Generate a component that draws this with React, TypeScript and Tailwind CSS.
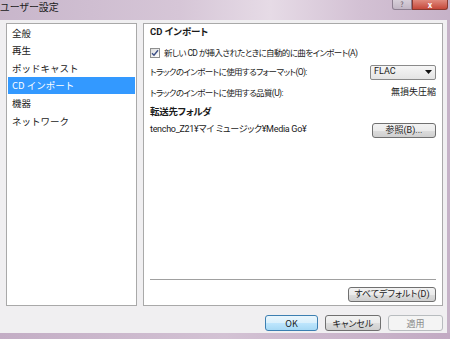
import React from 'react'

const font = "font-['Meiryo_UI','Noto_Sans_CJK_JP',sans-serif] [font-feature-settings:'palt']"
const panelFont = "font-['Roboto','Noto_Sans_CJK_JP',sans-serif] [font-feature-settings:'palt']"
// labels in the reference are set in a narrow UI face; squeeze them a bit
const label = 'text-[8.5px] tracking-[-0.6px]'

const menuItems = ['全般', '再生', 'ポッドキャスト', 'CD インポート', '機器', 'ネットワーク']

function WinButton({
  children,
  className = '',
  variant = 'normal',
}: {
  children: React.ReactNode
  className?: string
  variant?: 'normal' | 'default' | 'disabled'
}) {
  const look =
    variant === 'default'
      ? 'border-[#3c7fb1] bg-[linear-gradient(#eaf6fd_0%,#d9f0fc_50%,#bee6fd_51%,#a7d9f5_100%)] text-[#1a1a1a]'
      : variant === 'disabled'
        ? 'border-[#b8bcbf] bg-[#f4f4f4] text-[#8a8a8a]'
        : 'border-[#707070] bg-[linear-gradient(#f2f2f2_0%,#ebebeb_50%,#dddddd_51%,#cfcfcf_100%)] text-[#1a1a1a]'
  return (
    <div
      className={`flex h-[15px] items-center justify-center rounded-[3px] border text-[9px] leading-none ${look} ${className}`}
    >
      {children}
    </div>
  )
}

export default function App() {
  return (
    <div className={`flex h-[339px] w-[450px] flex-col overflow-hidden bg-[#f0eff1] ${font}`}>
      {/* title bar */}
      <div className="flex h-[20px] shrink-0 items-start justify-between bg-[linear-gradient(90deg,#c8b6cb_0%,#d6c6d7_40%,#e6dbe6_60%,#d3c1d4_80%,#c6b2c8_100%)]">
        <span className="pt-[1px] text-[10px] leading-[12px] text-[#202020]">ユーザー設定</span>
        <div className="mr-[2px] flex">
          <div className="flex h-[10px] w-[20px] items-center justify-center rounded-bl-[3px] border border-t-0 border-[#8d7f91] bg-[linear-gradient(#d8d0da,#c1b6c4)] text-[7px] leading-none text-[#5a5060]">
            ?
          </div>
          <div className="flex h-[10px] w-[36px] items-center justify-center rounded-br-[3px] border border-t-0 border-[#8a3a30] bg-[linear-gradient(#e08a7d,#c5483a)] text-[8px] font-bold leading-none text-white">
            x
          </div>
        </div>
      </div>

      {/* body */}
      <div className="flex flex-1 flex-col border-r-[3px] border-[#c5b2c7] pl-[6px] pr-[4px] pt-[3px]">
        <div className="flex h-[283px] gap-[6px]">
          {/* left list */}
          <div className="w-[131px] border border-[#a9a9a9] bg-white p-[1px] pt-0">
            {menuItems.map((item) => (
              <div
                key={item}
                className={`flex h-[17.6px] items-center pl-[4px] text-[9.5px] [font-feature-settings:normal] ${
                  item === 'CD インポート' ? 'bg-[#3399ff] text-white' : 'text-[#1a1a1a]'
                }`}
              >
                {item}
              </div>
            ))}
          </div>

          {/* right panel */}
          <div
            className={`flex flex-1 flex-col border border-[#a9a9a9] bg-white px-[6px] pb-[3px] text-[9px] tracking-[-0.3px] text-[#1a1a1a] ${panelFont}`}
          >
            <div className="flex h-[16px] items-center text-[9.5px] font-bold tracking-normal">CD インポート</div>

            <div className="mt-[5px] flex h-[16px] items-center gap-[4px]">
              <div className="flex h-[10px] w-[10px] items-center justify-center border border-[#8e8f8f] bg-[linear-gradient(135deg,#dcdcdc,#ffffff)]">
                <svg width="8" height="8" viewBox="0 0 8 8">
                  <path d="M1 4.2 L3 6.3 L7 1.2" fill="none" stroke="#3c4f86" strokeWidth="1.4" />
                </svg>
              </div>
              <span className={label}>新しい CD が挿入されたときに自動的に曲をインポート(A)</span>
            </div>

            <div className="mt-[3px] flex h-[16px] items-center justify-between">
              <span className={label}>トラックのインポートに使用するフォーマット(O):</span>
              <div className="flex h-[15px] w-[66px] items-center justify-between rounded-[2px] border border-[#8a8a8a] bg-[linear-gradient(#f6f6f6,#e4e4e4)] px-[3px] tracking-normal">
                <span>FLAC</span>
                <svg width="7" height="4" viewBox="0 0 7 4">
                  <path d="M0 0 H7 L3.5 4 Z" fill="#111" />
                </svg>
              </div>
            </div>

            <div className="mt-[5px] flex h-[16px] items-center justify-between">
              <span className={label}>トラックのインポートに使用する品質(U):</span>
              <span className="tracking-normal">無損失圧縮</span>
            </div>

            <div className="mt-[3px] flex h-[16px] items-center text-[9.5px] font-bold">転送先フォルダ</div>

            <div className="mt-[2px] flex h-[16px] items-center justify-between">
              <span>tencho_Z21¥マイ ミュージック¥Media Go¥</span>
              <WinButton className="w-[64px] tracking-normal">参照(B)...</WinButton>
            </div>

            <div className="flex-1" />
            <div className="border-t border-[#a0a0a0]" />
            <div className="mt-[7px] flex justify-end">
              <WinButton className="w-[88px] tracking-normal">すべてデフォルト(D)</WinButton>
            </div>
          </div>
        </div>

        {/* dialog buttons */}
        <div className="mt-[9px] flex justify-end gap-[7px]">
          <WinButton variant="default" className="h-[16px] w-[53px]">OK</WinButton>
          <WinButton className="h-[16px] w-[56px]">キャンセル</WinButton>
          <WinButton variant="disabled" className="h-[16px] w-[55px]">適用</WinButton>
        </div>
      </div>

      {/* bottom frame */}
      <div className="h-[6px] shrink-0 bg-[linear-gradient(90deg,#c3adc5,#d3c2d4,#c2aac3)]" />
    </div>
  )
}
